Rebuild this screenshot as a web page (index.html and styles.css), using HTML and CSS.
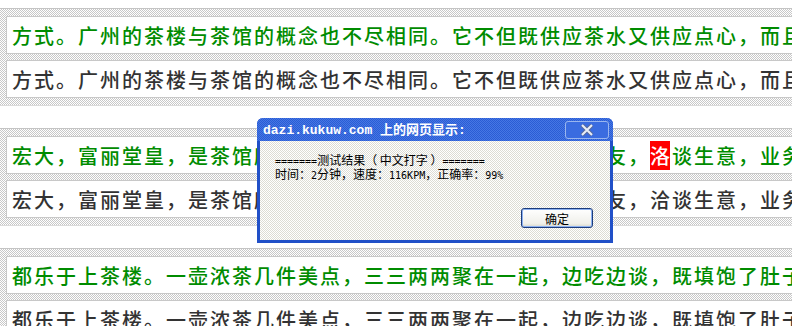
FILE: index.html
```html
<!DOCTYPE html>
<html lang="zh-CN">
<head>
    <meta charset="UTF-8">
    <title>中文打字</title>
    <link rel="stylesheet" href="styles.css">
</head>
<body>
    <div class="page">
        <div class="group">
            <div class="line typed">方式。广州的茶楼与茶馆的概念也不尽相同。它不但既供应茶水又供应点心，而且还</div>
            <div class="line source">方式。广州的茶楼与茶馆的概念也不尽相同。它不但既供应茶水又供应点心，而且还</div>
        </div>
        <div class="group">
            <div class="line typed">宏大，富丽堂皇，是茶馆所不能比拟的。人们常在茶楼会见亲友，<span class="err">洛</span>谈生意，业务往来</div>
            <div class="line source">宏大，富丽堂皇，是茶馆所不能比拟的。人们常在茶楼会见亲友，洽谈生意，业务往来</div>
        </div>
        <div class="group">
            <div class="line typed">都乐于上茶楼。一壶浓茶几件美点，三三两两聚在一起，边吃边谈，既填饱了肚子</div>
            <div class="line source">都乐于上茶楼。一壶浓茶几件美点，三三两两聚在一起，边吃边谈，既填饱了肚子</div>
        </div>
    </div>

    <div class="dialog">
        <div class="titlebar">
            <span class="title">dazi.kukuw.com 上的网页显示:</span>
            <span class="close">
                <svg width="14" height="12" viewBox="0 0 14 12">
                    <path d="M2 1 L12 11 M12 1 L2 11" stroke="#5a6c9c" stroke-width="4" fill="none"/>
                    <path d="M2 1 L12 11 M12 1 L2 11" stroke="#e8eef8" stroke-width="2" fill="none"/>
                </svg>
            </span>
        </div>
        <div class="dialog-body">
            <div class="message">
                <div class="msg-line"><span class="mono">=======</span>测试结果（ 中文打字 ）<span class="mono">=======</span></div>
                <div class="msg-line">时间：<span class="mono">2</span>分钟，速度：<span class="mono">116KPM</span>，正确率：<span class="mono">99%</span></div>
            </div>
            <div class="buttons">
                <button class="ok">确定</button>
            </div>
        </div>
    </div>
</body>
</html>
```

FILE: styles.css
```css
body {
    margin: 0;
    background: #fff;
    font-family: "Noto Sans CJK SC", sans-serif;
}
.page {
    width: 792px;
    height: 326px;
    overflow: hidden;
    padding-top: 8px;
    box-sizing: border-box;
}
.group {
    border-top: 1px solid #c4c4c4;
    border-bottom: 1px solid #dadada;
    background: repeating-conic-gradient(#c8c8c8 0 25%, #fff 0 50%) 0 0 / 2px 2px;
    padding: 7px 0 7px 6px;
    margin-bottom: 22px;
    display: flex;
    flex-direction: column;
    gap: 6px;
}
.line {
    height: 36px;
    line-height: 37px;
    margin-right: -40px;
    padding-left: 5px;
    background: #fff;
    border: 1px solid #c8c8c8;
    border-right: none;
    white-space: nowrap;
    overflow: hidden;
    font-size: 20px;
    font-weight: 500;
    letter-spacing: 2px;
}
.typed {
    color: #008c00;
}
.source {
    color: #333;
}
.err {
    background: #f00;
    color: #fff;
    letter-spacing: 0;
    margin-right: 2px;
}

.dialog {
    position: absolute;
    left: 257px;
    top: 118px;
    width: 356px;
    height: 125px;
    box-sizing: border-box;
    border: 3px solid #2150c8;
    border-top: none;
    border-radius: 6px 6px 0 0;
    display: flex;
    flex-direction: column;
}
.titlebar {
    height: 23px;
    margin: 0 -3px;
    padding: 0 4px 0 6px;
    border-radius: 6px 6px 0 0;
    background: repeating-conic-gradient(#2a5cd4 0 25%, #4677e4 0 50%) 0 0 / 2px 2px;
    display: flex;
    align-items: center;
    justify-content: space-between;
}
.title {
    color: #fff;
    font-family: "Liberation Mono", "Noto Sans CJK SC", monospace;
    font-weight: bold;
    font-size: 13px;
    margin-top: -2px;
}
.close {
    width: 44px;
    height: 18px;
    box-sizing: border-box;
    border: 1px solid #9ab6ee;
    border-radius: 3px;
    background: #3a6ce0;
    display: flex;
    align-items: center;
    justify-content: center;
}
.dialog-body {
    flex: 1;
    background: repeating-conic-gradient(#dcdcd4 0 25%, #fff 0 50%) 0 0 / 2px 2px;
    padding: 12px 17px 12px 15px;
    display: flex;
    flex-direction: column;
    font-size: 12px;
    color: #000;
}
.msg-line {
    height: 14px;
    line-height: 14px;
}
.mono {
    font-family: "DejaVu Sans Mono", monospace;
    font-size: 10px;
}
.buttons {
    margin-top: auto;
    display: flex;
    justify-content: flex-end;
}
.ok {
    width: 72px;
    height: 20px;
    padding: 0;
    border: 1px solid #1c3c7c;
    border-radius: 3px;
    background: linear-gradient(#fff, #f0f0ea 80%, #d8d8cc);
    box-shadow: inset 0 0 0 1px #8cb0f0;
    font-family: "Noto Sans CJK SC", sans-serif;
    font-size: 12px;
    color: #000;
}
```
